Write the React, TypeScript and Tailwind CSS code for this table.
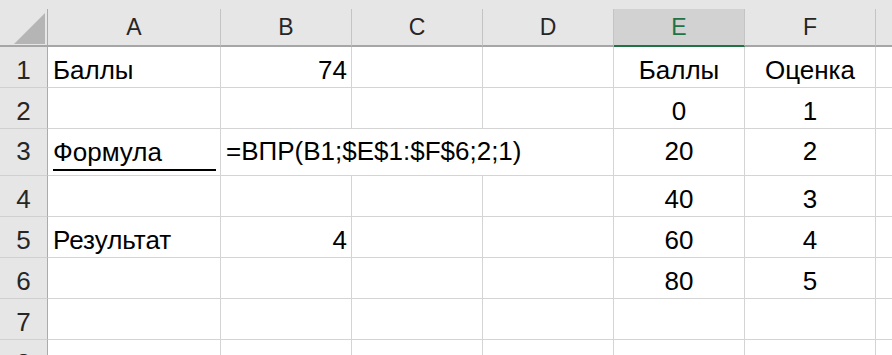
import React from "react"

type Align = "left" | "right" | "center"

type CellData = {
  text?: string
  align?: Align
  underline?: boolean
  // text spills into the next columns, so the right grid line is hidden
  spill?: boolean
}

// G is only a sliver at the right edge, its letter is out of view
const columns = ["A", "B", "C", "D", "E", "F", "G"]
const hiddenLabels = ["G"]
const activeColumn = "E"

const rowHeights = [41, 41, 47, 41, 41, 41, 41, 41]

const sheet: Record<number, Record<string, CellData>> = {
  1: {
    A: { text: "Баллы" },
    B: { text: "74", align: "right" },
    E: { text: "Баллы", align: "center" },
    F: { text: "Оценка", align: "center" },
  },
  2: {
    E: { text: "0", align: "center" },
    F: { text: "1", align: "center" },
  },
  3: {
    A: { text: "Формула", underline: true },
    B: { text: "=ВПР(B1;$E$1:$F$6;2;1)", spill: true },
    C: { spill: true },
    E: { text: "20", align: "center" },
    F: { text: "2", align: "center" },
  },
  4: {
    E: { text: "40", align: "center" },
    F: { text: "3", align: "center" },
  },
  5: {
    A: { text: "Результат" },
    B: { text: "4", align: "right" },
    E: { text: "60", align: "center" },
    F: { text: "4", align: "center" },
  },
  6: {
    E: { text: "80", align: "center" },
    F: { text: "5", align: "center" },
  },
}

const alignClass: Record<Align, string> = {
  left: "justify-start pl-[5px]",
  right: "justify-end pr-[4px]",
  center: "justify-center",
}

function Cell({ data, tall }: { data?: CellData; tall: boolean }) {
  const align = data?.align ?? "left"
  return (
    <div
      className={`relative flex items-end border-b border-[#d4d4d4] bg-white ${
        data?.spill ? "" : "border-r"
      } ${tall ? "pb-[9px]" : "pb-[2px]"} ${alignClass[align]}`}
    >
      {data?.underline ? (
        <div className="flex-1 mr-[4px] border-b-2 border-black pb-[2px] -mb-[5px] leading-[30px]">
          {data.text}
        </div>
      ) : (
        data?.text && (
          <span
            className={`leading-[30px] whitespace-nowrap ${
              data.spill ? "relative z-10" : ""
            }`}
          >
            {data.text}
          </span>
        )
      )}
    </div>
  )
}

export default function App() {
  return (
    <div className="h-[355px] w-[892px] overflow-hidden bg-[#e6e6e6] font-['Liberation_Sans',Arial,sans-serif] text-[26px] text-black">
      {/* strip above the column headers */}
      <div className="h-[9px]" />

      <div className="grid w-[1007px] grid-cols-[48px_173px_131px_131px_131px_131px_131px_131px] grid-rows-[38px_41px_41px_47px_41px_41px_41px_41px_41px]">
        {/* select-all corner */}
        <div className="relative border-r border-b-2 border-r-[#ababab] border-b-[#a6a6a6] bg-[#e6e6e6]">
          <svg
            className="absolute left-[14px] top-[4px]"
            width="31"
            height="31"
            viewBox="0 0 31 31"
          >
            <polygon points="31,0 31,31 0,31" fill="#b5b5b5" />
          </svg>
        </div>

        {/* column headers */}
        {columns.map((col) => (
          <div
            key={`col_${col}`}
            className={`flex items-end justify-center pb-[3px] text-[23px] leading-[30px] border-r border-r-[#c4c4c4] border-b-2 ${
              col === activeColumn
                ? "bg-[#d2d2d2] text-[#217346] border-b-[#217346]"
                : "bg-[#e6e6e6] text-[#262626] border-b-[#a6a6a6]"
            }`}
          >
            {hiddenLabels.includes(col) ? "" : col}
          </div>
        ))}

        {/* rows */}
        {rowHeights.map((_, idx) => {
          const row = idx + 1
          const tall = row === 3
          return (
            <React.Fragment key={`row_${row}`}>
              <div
                className={`flex items-end justify-center border-r border-r-[#ababab] border-b border-b-[#d0d0d0] bg-[#e6e6e6] text-[#262626] ${
                  tall ? "pb-[9px]" : "pb-[2px]"
                }`}
              >
                <span className="leading-[30px]">{row}</span>
              </div>
              {columns.map((col) => (
                <Cell
                  key={`cell_${col}${row}`}
                  data={sheet[row]?.[col]}
                  tall={tall}
                />
              ))}
            </React.Fragment>
          )
        })}
      </div>
    </div>
  )
}
